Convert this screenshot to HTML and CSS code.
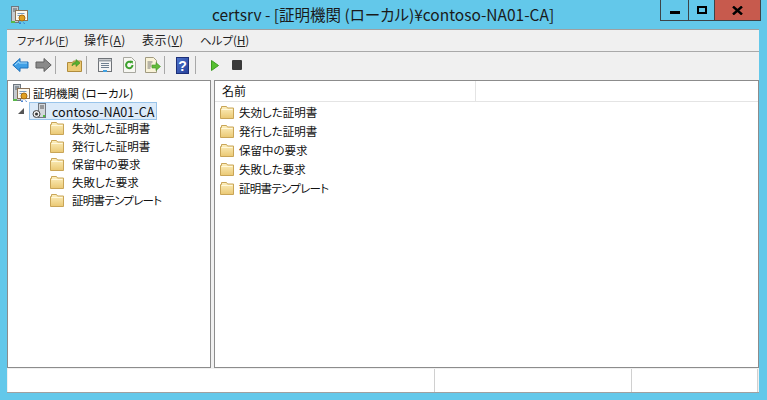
FILE: index.html
```html
<!DOCTYPE html>
<html lang="ja">
<head>
    <meta charset="UTF-8">
    <meta name="viewport" content="width=device-width, initial-scale=1.0">
    <title>certsrv</title>
    <link rel="stylesheet" href="styles.css">
</head>
<body>
    <!-- Shared icons -->
    <svg class="defs" width="0" height="0">
        <defs>
            <linearGradient id="folderFill" x1="0" y1="0" x2="0" y2="1">
                <stop offset="0" stop-color="#fdf0c0"/>
                <stop offset="1" stop-color="#eac873"/>
            </linearGradient>
            <linearGradient id="helpFill" x1="0" y1="0" x2="1" y2="1">
                <stop offset="0" stop-color="#4f74cc"/>
                <stop offset="1" stop-color="#25409a"/>
            </linearGradient>
            <symbol id="folder" viewBox="0 0 16 14">
                <path d="M1.500 13.500V3.500h1V1.500h5l1 1.500h6v10.500z" fill="url(#folderFill)" stroke="#c9a557"/>
                <path d="M2.500 4.500h11" stroke="#fff8dc" fill="none"/>
            </symbol>
            <symbol id="cert" viewBox="0 0 18 18">
                <rect x="1.500" y="0.500" width="7" height="16" fill="#c5cbd0" stroke="#6d7780"/>
                <path d="M3 3h4M3 5h4" stroke="#55606a"/>
                <rect x="5.500" y="4.500" width="12" height="10" fill="#fbf8ee" stroke="#8a7258"/>
                <path d="M7.500 7.500h7M7.500 9.500h4" stroke="#7a9cc0"/>
                <circle cx="12" cy="12" r="3" fill="#e0a020" stroke="#a86c10"/>
                <path d="M10 15l-1 3h2zM13 15l1 3h1z" fill="#2f6fc8"/>
                <rect x="1" y="15" width="4" height="2" fill="#58b848"/>
            </symbol>
        </defs>
    </svg>

    <header class="titlebar">
        <svg class="app-icon" width="18" height="18"><use href="#cert"/></svg>
        <h1 class="title">certsrv - [証明機関 (ローカル)¥contoso-NA01-CA]</h1>
        <div class="caption">
            <div class="cap-btn cap-min"><span class="min-glyph"></span></div>
            <div class="cap-btn cap-max"><span class="max-glyph"></span></div>
            <div class="cap-btn cap-close">
                <svg width="11" height="9" viewBox="0 0 11 9"><path d="M1 0.500l9 8M10 0.500l-9 8" stroke="#000" stroke-width="2.400" fill="none"/></svg>
            </div>
        </div>
    </header>

    <div class="window">
        <nav class="menubar">
            <span class="menu-item menu-file">ファイル(<u>F</u>)</span>
            <span class="menu-item menu-action">操作(<u>A</u>)</span>
            <span class="menu-item menu-view">表示(<u>V</u>)</span>
            <span class="menu-item menu-help">ヘルプ(<u>H</u>)</span>
        </nav>

        <div class="toolbar">
            <svg class="tool" width="17" height="16" viewBox="0 0 17 16"><path d="M0.800 8L8 1.500V5h8v6H8v3.500z" fill="#3f9fe6" stroke="#1f6fb8"/><path d="M3 8l4-3.500V6h8" stroke="#a8dcfa" fill="none"/></svg>
            <svg class="tool tool-next" width="17" height="16" viewBox="0 0 17 16"><path d="M16.200 8L9 1.500V5H1v6h8v3.500z" fill="#8a8a8a" stroke="#606060"/></svg>
            <span class="sep sep-a"></span>
            <svg class="tool" width="15" height="16" viewBox="0 0 15 16"><path d="M0.500 14.500V5.500h5l1-1.500h8v10.500z" fill="#ecca74" stroke="#b08c3c"/><path d="M5 9c0-3 2-4 4-4V2.500l4 3.500-4 3.500V7c-2 0-3 1-4 2z" fill="#58b030" stroke="#3d8a20" stroke-width="0.600"/></svg>
            <span class="sep sep-b"></span>
            <svg class="tool" width="16" height="16" viewBox="0 0 16 16"><rect x="1.500" y="1.500" width="13" height="13" fill="#f4f4f4" stroke="#6f7378"/><path d="M1.500 3.500h13" stroke="#9aa0a6" stroke-width="2"/><path d="M4 6.500h8M4 8.500h8M4 10.500h8" stroke="#6f7f90"/><path d="M6 14h4" stroke="#3fa0e0" stroke-width="2"/></svg>
            <svg class="tool tool-refresh" width="15" height="16" viewBox="0 0 15 16"><path d="M1.500 0.500h8l4 4v11h-12z" fill="#f7f7f2" stroke="#a8a8a0"/><path d="M10.500 8a3.200 3.200 0 1 1-1-2.300" fill="none" stroke="#3aa02c" stroke-width="2"/><path d="M8 3.500l3 0.500-0.500 3z" fill="#3aa02c"/></svg>
            <svg class="tool tool-export" width="17" height="16" viewBox="0 0 17 16"><path d="M1.500 0.500h8l3 3v12h-11z" fill="#f9f3d8" stroke="#a09a80"/><path d="M3.500 5h5M3.500 7h4M3.500 9h4M3.500 11h3" stroke="#777"/><path d="M8 8h4V5.500L16.500 9.500 12 13.500V11H8z" fill="#62bb3a" stroke="#3f9426" stroke-width="0.600"/></svg>
            <span class="sep sep-c"></span>
            <svg class="tool" width="13" height="17" viewBox="0 0 13 17"><rect x="0.500" y="0.500" width="12" height="16" fill="url(#helpFill)" stroke="#1c2f78"/><text class="help-q" x="6.500" y="13.500" text-anchor="middle">?</text></svg>
            <span class="sep sep-d"></span>
            <svg class="tool" width="8" height="11" viewBox="0 0 8 11"><path d="M0.500 0.500L7.500 5.500L0.500 10.500z" fill="#55c030" stroke="#3d9a22"/></svg>
            <span class="tool tool-stop"></span>
        </div>

        <div class="panes">
            <aside class="tree">
                <div class="tree-root">
                    <svg width="18" height="18"><use href="#cert"/></svg>
                    <span>証明機関 (ローカル)</span>
                </div>
                <div class="tree-ca">
                    <span class="expander"></span>
                    <div class="ca-selected">
                        <svg width="16" height="16" viewBox="0 0 16 16"><rect x="6.500" y="0.500" width="7" height="14" fill="#d4d8dc" stroke="#727880"/><path d="M8 3h4M8 5h4" stroke="#555"/><circle cx="4.500" cy="11" r="3.500" fill="#eee" stroke="#444"/><circle cx="4.500" cy="11" r="1.500" fill="#333"/><rect x="11" y="12" width="2" height="2" fill="#50c040"/></svg>
                        <span class="ca-name">contoso-NA01-CA</span>
                    </div>
                </div>
                <ul class="tree-list">
                    <li class="tree-item"><svg width="16" height="14"><use href="#folder"/></svg>失効した証明書</li>
                    <li class="tree-item"><svg width="16" height="14"><use href="#folder"/></svg>発行した証明書</li>
                    <li class="tree-item"><svg width="16" height="14"><use href="#folder"/></svg>保留中の要求</li>
                    <li class="tree-item"><svg width="16" height="14"><use href="#folder"/></svg>失敗した要求</li>
                    <li class="tree-item tight"><svg width="16" height="14"><use href="#folder"/></svg>証明書テンプレート</li>
                </ul>
            </aside>
            <main class="list">
                <div class="list-head">
                    <div class="col-name">名前</div>
                    <div class="col-rest"></div>
                </div>
                <ul class="list-rows">
                    <li class="list-row"><svg width="16" height="14"><use href="#folder"/></svg>失効した証明書</li>
                    <li class="list-row"><svg width="16" height="14"><use href="#folder"/></svg>発行した証明書</li>
                    <li class="list-row"><svg width="16" height="14"><use href="#folder"/></svg>保留中の要求</li>
                    <li class="list-row"><svg width="16" height="14"><use href="#folder"/></svg>失敗した要求</li>
                    <li class="list-row tight"><svg width="16" height="14"><use href="#folder"/></svg>証明書テンプレート</li>
                </ul>
            </main>
        </div>

        <footer class="statusbar">
            <div class="status-main"></div>
            <div class="status-mid"></div>
            <div class="status-end"></div>
        </footer>
    </div>
</body>
</html>
```

FILE: styles.css
```css
* {
    box-sizing: border-box;
}
html, body {
    height: 100%;
}
body {
    margin: 0;
    overflow: hidden;
    background-color: #63c8ea;
    font-family: "Noto Sans CJK JP", "Noto Sans", sans-serif;
    font-size: 11.500px;
    font-feature-settings: "palt";
    color: #111;
    padding: 0 8px 7px 7px;
    display: flex;
    flex-direction: column;
}
.defs {
    position: absolute;
}
ul {
    list-style: none;
    margin: 0;
    padding: 0;
}
.tight {
    letter-spacing: -0.700px;
}

/* Title bar */
.titlebar {
    height: 29px;
    flex: none;
    display: flex;
    position: relative;
    justify-content: center;
}
.app-icon {
    position: absolute;
    left: 3px;
    top: 6px;
}
.title {
    margin: 0;
    padding-top: 4px;
    font-size: 15.500px;
    font-weight: normal;
    line-height: 20px;
    color: #1a1a1a;
    white-space: nowrap;
}
.caption {
    position: absolute;
    top: 0;
    right: -2px;
    display: flex;
    height: 21px;
    border: 1px solid #3c4448;
    border-top: none;
}
.cap-btn {
    display: flex;
    align-items: center;
    justify-content: center;
}
.cap-min {
    width: 28px;
    border-right: 1px solid #3c4448;
}
.cap-max {
    width: 26px;
    border-right: 1px solid #3c4448;
}
.cap-close {
    width: 45px;
    background-color: #c75a4d;
}
.min-glyph {
    width: 10px;
    height: 3px;
    margin-top: 5px;
    background-color: #000;
}
.max-glyph {
    width: 10px;
    height: 8px;
    border: 2px solid #000;
    margin-bottom: 1px;
}

/* Window */
.window {
    flex: 1;
    display: flex;
    flex-direction: column;
    min-height: 0;
    background-color: #f0f0f0;
    border-top: 1px solid #a0a0a0;
    border-bottom: 1px solid #a0a0a0;
}
.menubar {
    height: 22px;
    flex: none;
    display: flex;
    align-items: center;
    padding: 0 0 2px 10px;
    border-bottom: 1px solid #a9a9a9;
    color: #222;
}
.menu-item {
    white-space: nowrap;
    line-height: 20px;
}
.menu-file {
    width: 67px;
    font-size: 11px;
}
.menu-action,
.menu-view {
    width: 58px;
    font-size: 12px;
    letter-spacing: 0.500px;
}
.toolbar {
    height: 26px;
    flex: none;
    display: flex;
    align-items: center;
    padding-left: 5px;
}
.tool {
    flex: none;
    display: block;
}
.tool-next {
    margin-left: 6px;
}
.tool-refresh {
    margin-left: 9px;
}
.tool-export {
    margin-left: 7px;
}
.sep {
    width: 1px;
    height: 18px;
    background-color: #a8a8a8;
    flex: none;
}
.sep-a {
    margin: 0 11px 0 3px;
}
.sep-b {
    margin: 0 10px 0 4px;
}
.sep-c {
    margin: 0 11px 0 3px;
}
.sep-d {
    margin: 0 15px 0 6px;
}
.help-q {
    font-family: "Liberation Sans", sans-serif;
    font-size: 14px;
    font-weight: bold;
    fill: #fff;
}
.tool-stop {
    width: 10px;
    height: 10px;
    margin-left: 13px;
    background-color: #3a3a3a;
    border-radius: 1px;
}

/* Panes */
.panes {
    flex: 1;
    min-height: 0;
    display: flex;
    gap: 3px;
    padding-top: 2px;
}
.tree {
    width: 204px;
    flex: none;
    background-color: #fff;
    border: 1px solid #8c8c8c;
    padding-top: 2px;
}
.tree-root {
    height: 19px;
    display: flex;
    align-items: center;
    gap: 3px;
    padding-left: 4px;
}
.tree-ca {
    height: 18px;
    margin-bottom: -1px;
    display: flex;
    align-items: center;
}
.expander {
    width: 0;
    height: 0;
    margin-left: 10px;
    margin-right: 5px;
    border-style: solid;
    border-width: 0 0 6px 6px;
    border-color: transparent transparent #555 transparent;
}
.ca-selected {
    height: 18px;
    width: 128px;
    display: flex;
    align-items: center;
    gap: 4px;
    padding-left: 2px;
    background-color: #dbeaf9;
    border: 1px solid #99c4ea;
    white-space: nowrap;
}
.ca-name {
    font-size: 12.600px;
}
.tree-list {
    padding-left: 41px;
}
.tree-item {
    height: 18px;
    display: flex;
    align-items: center;
    gap: 7px;
    white-space: nowrap;
}
.list {
    flex: 1;
    min-width: 0;
    background-color: #fff;
    border: 1px solid #8c8c8c;
}
.list-head {
    height: 21px;
    display: flex;
    border-bottom: 1px solid #e4e4e4;
    font-size: 12px;
}
.col-name {
    width: 261px;
    padding-left: 7px;
    line-height: 20px;
    border-right: 1px solid #e4e4e4;
}
.col-rest {
    flex: 1;
}
.list-row {
    height: 19px;
    display: flex;
    align-items: center;
    gap: 4px;
    padding-left: 4px;
    white-space: nowrap;
}

/* Status bar */
.statusbar {
    height: 23px;
    flex: none;
    display: flex;
    margin: 1px 1px 0 1px;
    background-color: #fff;
}
.status-main {
    width: 427px;
    border-right: 1px solid #d0d0d0;
}
.status-mid {
    width: 197px;
    border-right: 1px solid #d0d0d0;
}
.status-end {
    flex: 1;
    border-right: 1px solid #d0d0d0;
}
```
